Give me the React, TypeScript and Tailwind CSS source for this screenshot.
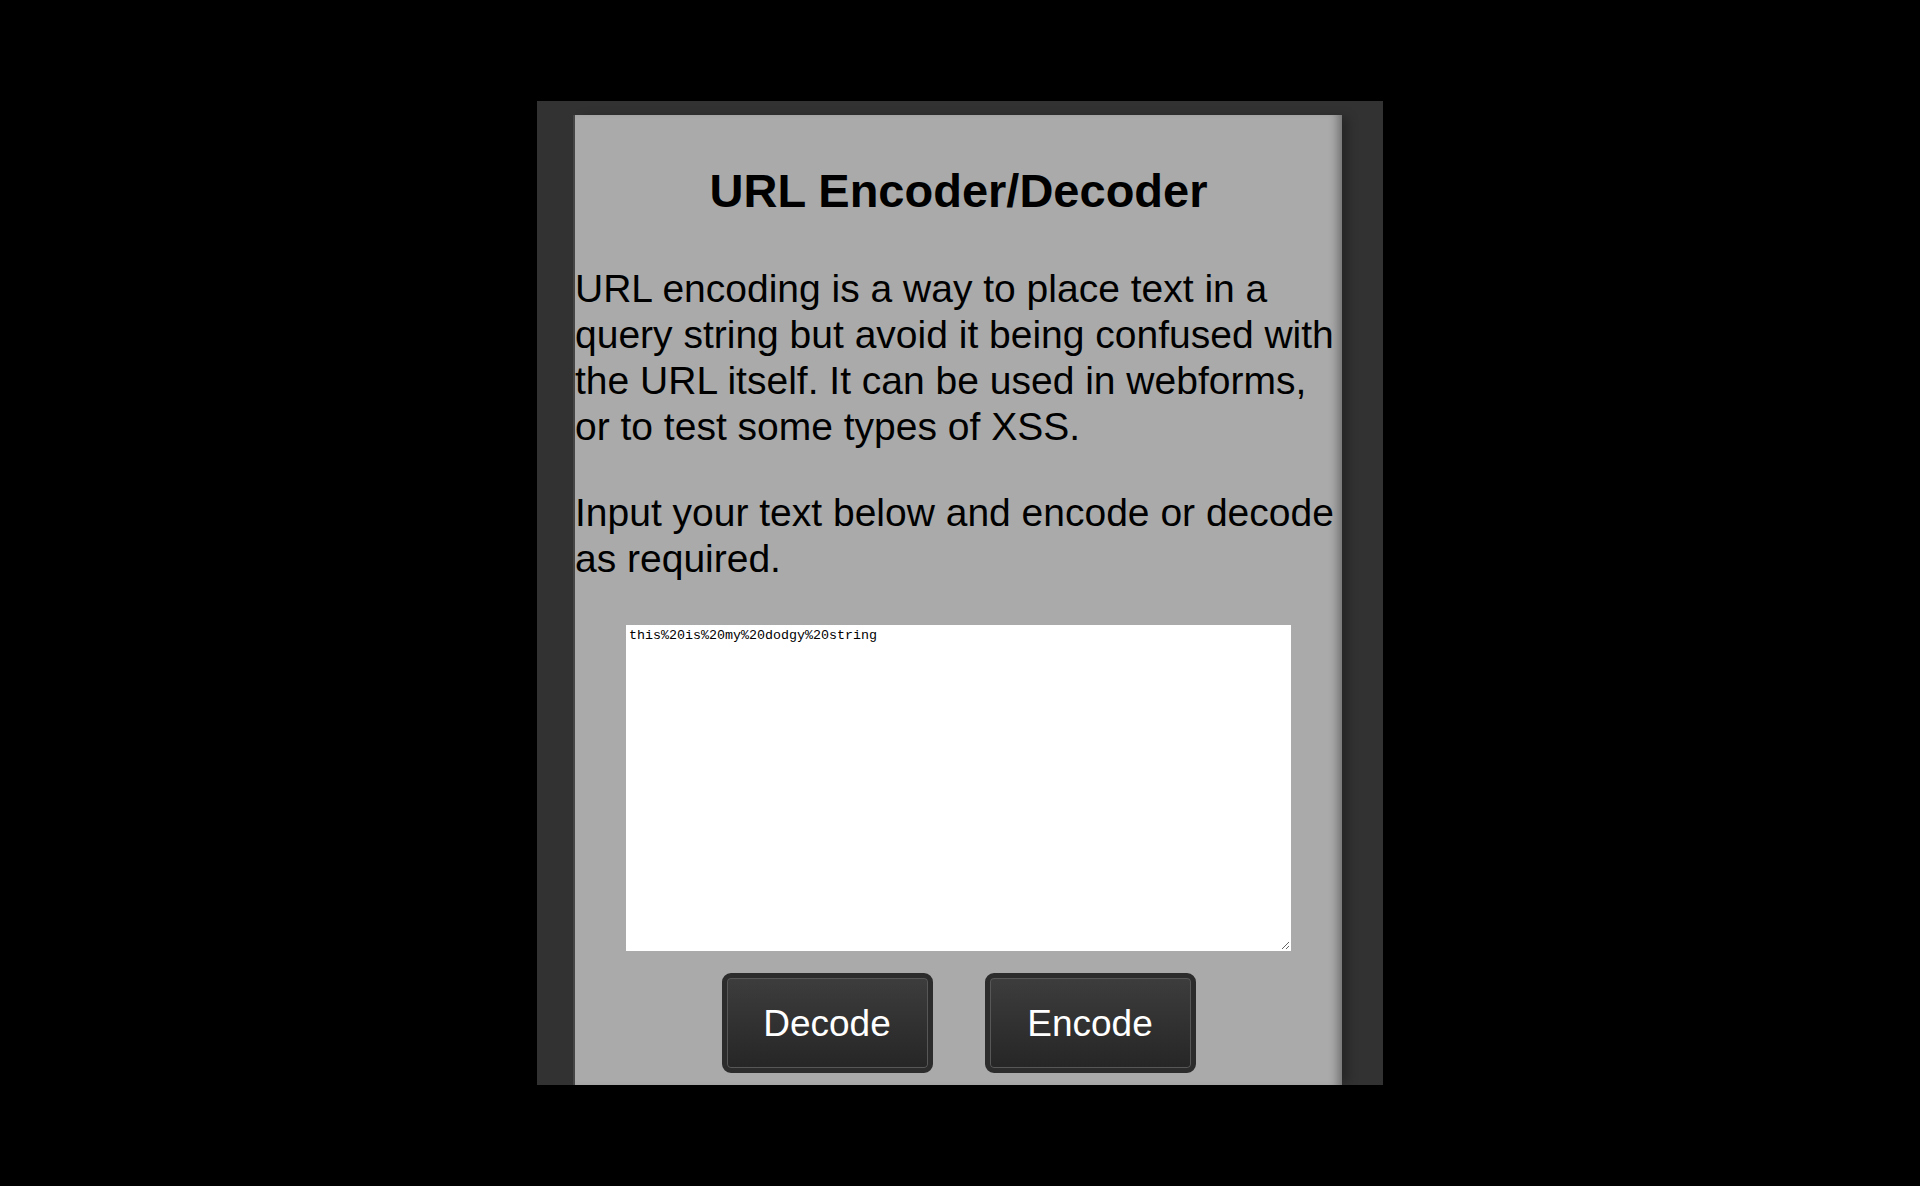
import React, { useState } from 'react';

function ActionButton({ label, onClick }: { label: string; onClick: () => void }) {
  return (
    <button
      type="button"
      onClick={onClick}
      className="h-[100px] w-[211px] cursor-pointer rounded-[9px] border-[5px] border-[#2c2c2c] bg-gradient-to-b from-[#3d3d3d] to-[#262626] text-[37px] leading-none text-white shadow-[inset_0_0_0_1px_#575757]"
    >
      {label}
    </button>
  );
}

export default function App() {
  const [text, setText] = useState('this%20is%20my%20dodgy%20string');

  const decode = () => {
    try {
      setText(decodeURIComponent(text));
    } catch {
      // leave malformed input alone
    }
  };

  const encode = () => setText(encodeURIComponent(text));

  return (
    <div className="min-h-[1186px] bg-black pt-[101px] font-['Liberation_Sans',Arial,sans-serif] text-black">
      <div className="mx-auto h-[984px] w-[846px] overflow-hidden bg-[#323232] pt-[14px]">
        {/* Content panel */}
        <div className="ml-[36px] h-full w-[769px] border-l-2 border-[#454545] bg-[#aaaaaa] shadow-[inset_-10px_0_10px_-6px_rgba(0,0,0,0.35),8px_0_10px_-2px_rgba(0,0,0,0.25)]">
          <h1 className="pt-[49px] text-center text-[47px] font-bold leading-[54px]">URL Encoder/Decoder</h1>

          <p className="mt-[48px] text-[39px] leading-[46px]">
            URL encoding is a way to place text in a query string but avoid it being confused with the URL itself. It
            can be used in webforms, or to test some types of XSS.
          </p>

          <p className="mt-[40px] text-[39px] leading-[46px]">Input your text below and encode or decode as required.</p>

          <div className="mt-[43px] flex justify-center">
            <textarea
              value={text}
              onChange={(e) => setText(e.target.value)}
              className="block h-[326px] w-[665px] border border-white bg-white p-[2px] font-['Liberation_Mono','Courier_New',monospace] text-[13.33px] leading-[15px] text-black outline-none"
            />
          </div>

          <div className="mt-[22px] flex justify-center gap-[52px]">
            <ActionButton label="Decode" onClick={decode} />
            <ActionButton label="Encode" onClick={encode} />
          </div>
        </div>
      </div>
    </div>
  );
}
